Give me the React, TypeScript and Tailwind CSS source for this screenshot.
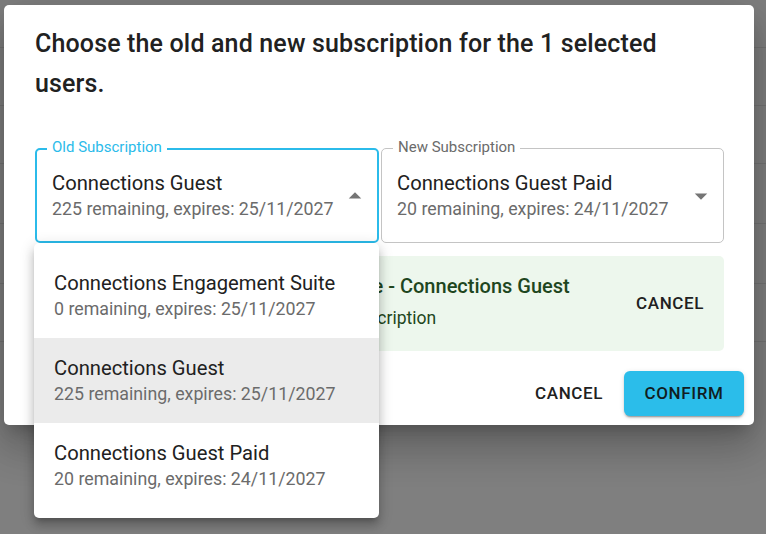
import React from "react";

const options = [
  { name: "Connections Engagement Suite", sub: "0 remaining, expires: 25/11/2027", selected: false },
  { name: "Connections Guest", sub: "225 remaining, expires: 25/11/2027", selected: true },
  { name: "Connections Guest Paid", sub: "20 remaining, expires: 24/11/2027", selected: false },
];

function ArrowUp() {
  return (
    <svg viewBox="0 0 24 24" className="w-[30px] h-[30px] mr-[7px] shrink-0" fill="#757575">
      <path d="M7 14l5-5 5 5z" />
    </svg>
  );
}

function ArrowDown() {
  return (
    <svg viewBox="0 0 24 24" className="w-[30px] h-[30px] mr-[7px] shrink-0" fill="#757575">
      <path d="M7 10l5 5 5-5z" />
    </svg>
  );
}

export default function App() {
  return (
    <div className="relative w-[766px] h-[534px] overflow-hidden bg-white font-['Roboto',sans-serif]">
      {/* page behind */}
      <div className="flex flex-col">
        <div className="h-[48px] border-b border-[#e6e6e6]" />
        <div className="h-[58px] border-b border-[#e6e6e6]" />
        <div className="h-[58px] border-b border-[#e6e6e6]" />
        <div className="h-[60px] border-b border-[#e6e6e6]" />
        <div className="h-[60px] border-b border-[#e6e6e6]" />
        <div className="h-[58px] border-b border-[#e6e6e6]" />
      </div>
      {/* backdrop */}
      <div className="absolute inset-0 bg-black/50" />

      {/* dialog */}
      <div className="absolute left-[4px] top-[5px] w-[750px] bg-white rounded-[5px] shadow-[0_11px_15px_-7px_rgba(0,0,0,0.2),0_24px_38px_3px_rgba(0,0,0,0.14),0_9px_46px_8px_rgba(0,0,0,0.12)] flex flex-col">
        <div className="pt-[19px] pl-[31px] pr-[30px]">
          <h2 className="max-w-[670px] text-[25px] leading-[40px] font-medium text-[#212121] tracking-[0.15px]">
            Choose the old and new subscription for the 1 selected users.
          </h2>

          <div className="mt-[44px] flex gap-[2px]">
            {/* old field */}
            <div className="relative w-[344px] h-[95px] border-2 border-[#2bbbea] rounded-[5px] flex items-center pl-[15px]">
              <span className="absolute left-[10px] top-[-12px] bg-white px-[5px] text-[15px] leading-[18px] text-[#2bbbea]">
                Old Subscription
              </span>
              <div className="flex-1 flex flex-col">
                <span className="text-[20.2px] leading-[27px] text-[#212121]">Connections Guest</span>
                <span className="text-[17.8px] leading-[24px] text-[#6b6b6b]">225 remaining, expires: 25/11/2027</span>
              </div>
              <ArrowUp />
            </div>
            {/* new field */}
            <div className="relative w-[343px] h-[95px] border border-[#c4c4c4] rounded-[5px] flex items-center pl-[15px]">
              <span className="absolute left-[11px] top-[-11px] bg-white px-[5px] text-[15px] leading-[18px] text-[#6b6b6b]">
                New Subscription
              </span>
              <div className="flex-1 flex flex-col">
                <span className="text-[20.2px] leading-[27px] text-[#212121]">Connections Guest Paid</span>
                <span className="text-[17.8px] leading-[24px] text-[#6b6b6b]">20 remaining, expires: 24/11/2027</span>
              </div>
              <ArrowDown />
            </div>
          </div>

          {/* alert */}
          <div className="mt-[13px] w-[689px] h-[95px] bg-[#edf7ed] rounded-[5px] flex items-start pt-[15px] pl-[20px] pr-[10px] text-[#1e4620]">
            <svg viewBox="0 0 24 24" className="w-[27px] h-[27px] mr-[15px] mt-[2px] shrink-0" fill="#2e7d32">
              <path d="M20,12A8,8 0 0,1 12,20A8,8 0 0,1 4,12A8,8 0 0,1 12,4C12.76,4 13.5,4.11 14.2, 4.31L15.77,2.74C14.61,2.26 13.34,2 12,2A10,10 0 0,0 2,12A10,10 0 0,0 12,22A10,10 0 0,0 22,12M7.91,10.08L6.5,11.5L11,16L21,6L19.59,4.58L11,13.17L7.91,10.08Z" />
            </svg>
            <div className="flex-1 flex flex-col">
              <span className="pl-[6px] text-[20px] leading-[30px] font-medium mb-[4px]">Existing subscription to change - Connections Guest</span>
              <span className="text-[17.5px] leading-[26px]">Users will be moved out of this subscription</span>
            </div>
            <button className="self-center -mt-[15px] px-[10px] h-[40px] text-[17px] font-medium tracking-[0.6px] text-[#212121] uppercase">
              Cancel
            </button>
          </div>
        </div>

        {/* actions */}
        <div className="mt-[20px] pb-[9px] pr-[10px] flex justify-end items-center gap-[11px]">
          <button className="h-[45px] px-[10px] text-[17px] font-medium tracking-[0.6px] text-[#212121] uppercase">
            Cancel
          </button>
          <button className="h-[45px] w-[120px] rounded-[6px] bg-[#2bbdea] text-[17px] font-medium tracking-[0.6px] text-[#111d22] uppercase shadow-[0_3px_1px_-2px_rgba(0,0,0,0.2),0_2px_2px_0_rgba(0,0,0,0.14),0_1px_5px_0_rgba(0,0,0,0.12)]">
            Confirm
          </button>
        </div>
      </div>

      {/* dropdown menu */}
      <div className="absolute left-[34px] top-[243px] w-[345px] bg-white rounded-[5px] py-[10px] shadow-[0_5px_5px_-3px_rgba(0,0,0,0.2),0_8px_10px_1px_rgba(0,0,0,0.14),0_3px_14px_2px_rgba(0,0,0,0.12)] flex flex-col">
        {options.map((o) => (
          <div
            key={o.name}
            className={`h-[85px] pl-[20px] flex flex-col justify-center ${o.selected ? "bg-[#ebebeb]" : ""}`}
          >
            <span className="text-[20.2px] leading-[27px] text-[#212121]">{o.name}</span>
            <span className="text-[17.8px] leading-[24px] text-[#6b6b6b]">{o.sub}</span>
          </div>
        ))}
      </div>
    </div>
  );
}
